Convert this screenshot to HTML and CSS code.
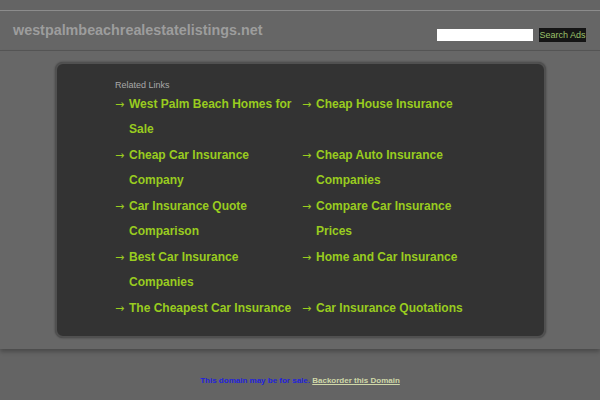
FILE: index.html
```html
<!DOCTYPE html>
<html>
<head>
<meta charset="utf-8">
<link rel="stylesheet" href="styles.css">
</head>
<body>
<div class="page">
  <header class="header">
    <div class="site">westpalmbeachrealestatelistings.net</div>
    <form class="search">
      <input class="search-input" type="text">
      <button class="search-btn" type="button">Search Ads</button>
    </form>
  </header>
  <main class="band">
    <div class="box">
      <div class="box-title">Related Links</div>
      <ul class="links">
        <li><span class="arr">&#8594;</span><a>West Palm Beach Homes for Sale</a></li>
        <li><span class="arr">&#8594;</span><a>Cheap House Insurance</a></li>
        <li><span class="arr">&#8594;</span><a>Cheap Car Insurance Company</a></li>
        <li><span class="arr">&#8594;</span><a>Cheap Auto Insurance Companies</a></li>
        <li><span class="arr">&#8594;</span><a>Car Insurance Quote Comparison</a></li>
        <li><span class="arr">&#8594;</span><a>Compare Car Insurance Prices</a></li>
        <li><span class="arr">&#8594;</span><a>Best Car Insurance Companies</a></li>
        <li><span class="arr">&#8594;</span><a>Home and Car Insurance</a></li>
        <li><span class="arr">&#8594;</span><a>The Cheapest Car Insurance</a></li>
        <li><span class="arr">&#8594;</span><a>Car Insurance Quotations</a></li>
      </ul>
    </div>
  </main>
  <footer class="footer">
    <span class="sale">This domain may be for sale.</span> <a class="backorder">Backorder this Domain</a>
  </footer>
</div>
</body>
</html>
```
FILE: styles.css
```css
html, body {
  margin: 0;
  padding: 0;
  background: #646464;
  font-family: "Liberation Sans", Arial, sans-serif;
}
.page {
  padding-top: 10px;
}
.header {
  height: 39px;
  border-top: 1px solid #8c8c8c;
  border-bottom: 1px solid #555;
  display: flex;
  align-items: center;
  justify-content: space-between;
  padding: 0 14px 0 13px;
  background: #666;
}
.site {
  color: #9d9d9d;
  font-weight: bold;
  font-size: 14.35px;
  margin-top: -1px;
}
.search {
  display: flex;
  align-items: center;
  gap: 6px;
  margin: 9px 0 0 0;
}
.search-input {
  width: 96px;
  height: 12px;
  box-sizing: border-box;
  border: none;
  background: #fff;
  padding: 0;
  margin: 0;
}
.search-btn {
  height: 14px;
  width: 47px;
  padding: 0;
  border: none;
  background: #151515;
  color: #9cc26a;
  font-family: "Liberation Sans", Arial, sans-serif;
  font-size: 9px;
  line-height: 14px;
}
.band {
  display: block;
  background: #676767;
  padding: 11px 0 11px;
  box-shadow: 0 3px 4px rgba(0,0,0,0.25);
  position: relative;
}
.box {
  margin-left: 55px;
  width: 429px;
  height: 257px;
  background: #333;
  border: 2px solid #505050;
  border-radius: 8px;
  box-shadow: 0 0 2px rgba(0,0,0,0.4);
  padding: 15px 0 0 58px;
  box-sizing: content-box;
}
.box-title {
  color: #a8a8a8;
  font-size: 9px;
  line-height: 12px;
  margin-bottom: 1px;
}
.links {
  list-style: none;
  margin: 0;
  padding: 0;
  display: grid;
  grid-template-columns: 187px 187px;
  row-gap: 1px;
}
.links li {
  display: flex;
  font-size: 12px;
  font-weight: bold;
  line-height: 25px;
  color: #99cc1f;
}
.arr {
  width: 14px;
  flex: none;
  font-weight: normal;
  font-family: "DejaVu Sans", sans-serif;
  font-size: 11px;
  color: #99cc1f;
}
.links a {
  color: #99cc1f;
}
.footer {
  text-align: center;
  font-size: 8px;
  font-weight: bold;
  padding-top: 27px;
}
.sale {
  color: #2222dd;
}
.backorder {
  color: #cfd8a8;
  text-decoration: underline;
}
```
